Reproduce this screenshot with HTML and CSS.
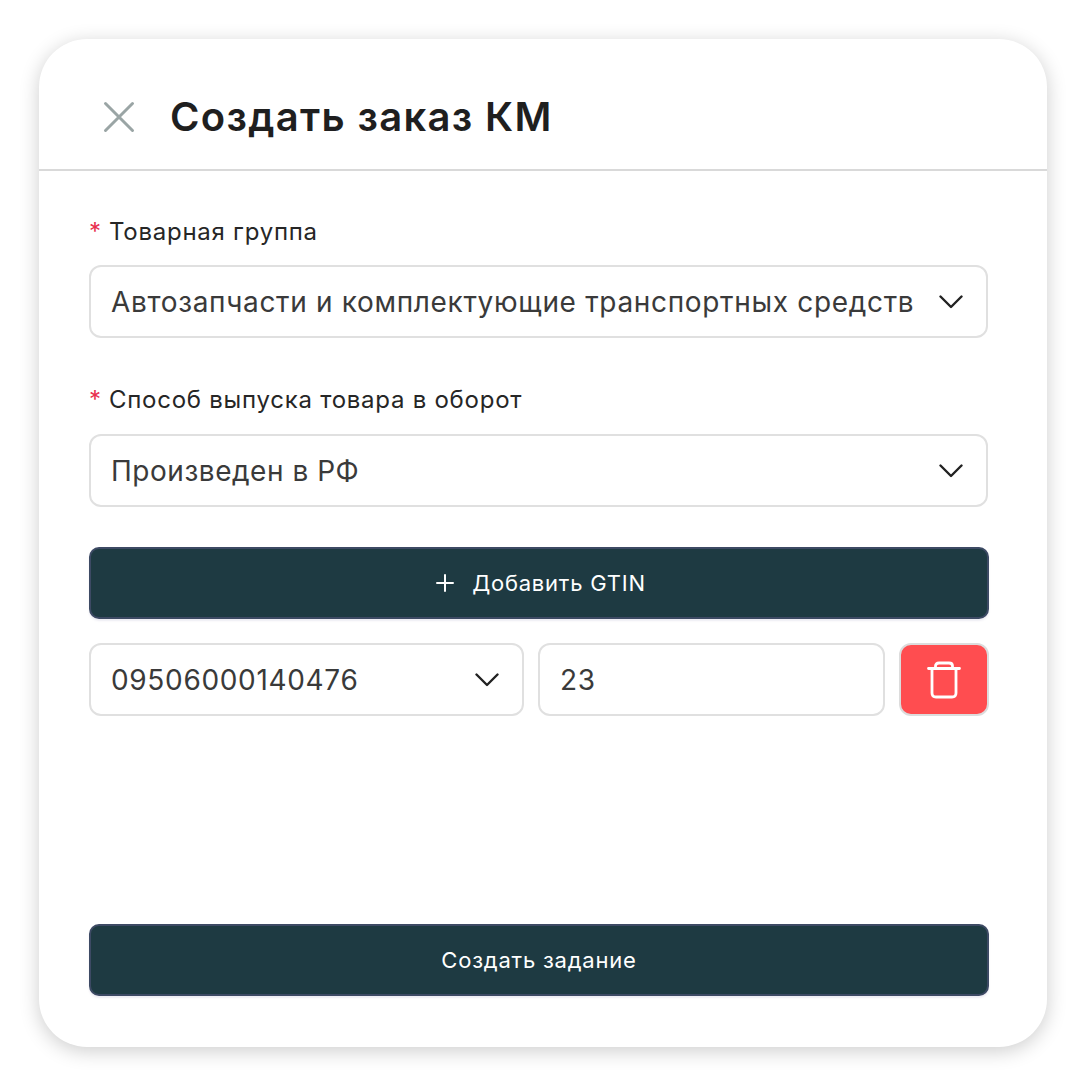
FILE: index.html
```html
<!DOCTYPE html>
<html lang="ru">
<head>
<meta charset="utf-8">
<title>Создать заказ КМ</title>
<link rel="stylesheet" href="styles.css">
</head>
<body>
<main class="card">
  <header class="head">
    <svg class="close" width="34" height="34" viewBox="0 0 34 34"><path d="M3.5 3.5 L30.5 30.5 M30.5 3.5 L3.5 30.5"/></svg>
    <h1 class="title">Создать заказ КМ</h1>
  </header>
  <div class="body">
    <div class="label label-first"><span class="req">*</span>Товарная группа</div>
    <div class="field field-full">
      <span class="value">Автозапчасти и комплектующие транспортных средств</span>
      <svg class="chev" width="24" height="14" viewBox="0 0 24 14"><path d="M1.5 1.5 L12 12 L22.5 1.5"/></svg>
    </div>
    <div class="label label-second"><span class="req">*</span>Способ выпуска товара в оборот</div>
    <div class="field field-full">
      <span class="value value-tight">Произведен в РФ</span>
      <svg class="chev" width="24" height="14" viewBox="0 0 24 14"><path d="M1.5 1.5 L12 12 L22.5 1.5"/></svg>
    </div>
    <button class="btn btn-add">
      <svg class="plus" width="18" height="18" viewBox="0 0 18 18"><path d="M9 1 V17 M1 9 H17"/></svg>
      Добавить GTIN
    </button>
    <div class="row">
      <div class="field field-gtin">
        <span class="value">09506000140476</span>
        <svg class="chev" width="24" height="14" viewBox="0 0 24 14"><path d="M1.5 1.5 L12 12 L22.5 1.5"/></svg>
      </div>
      <div class="field field-qty"><span class="value">23</span></div>
      <button class="del">
        <svg class="trash" width="34" height="38" viewBox="0 0 34 38"><path d="M1.5 7.5 H32.5 M5 7.5 V32 Q5 36 9 36 H25 Q29 36 29 32 V7.5 M8.5 7.5 V5 Q8.5 2 12 2 H22 Q25.5 2 25.5 5 V7.5"/></svg>
      </button>
    </div>
    <div class="spacer"></div>
    <button class="btn">Создать задание</button>
  </div>
</main>
</body>
</html>
```

FILE: styles.css
```css
* { box-sizing: border-box; }
html, body { margin: 0; padding: 0; background: #fff; }
body {
  width: 1085px;
  height: 1085px;
  padding: 39px 38px 38px 39px;
  font-family: Inter, "Liberation Sans", sans-serif;
  overflow: hidden;
}
.card {
  width: 1008px;
  height: 1008px;
  background: #fff;
  border-radius: 48px;
  box-shadow: 0 4px 20px rgba(0, 0, 0, 0.2);
  display: flex;
  flex-direction: column;
}
.head {
  height: 132px;
  border-bottom: 2px solid #d9d9d9;
  display: flex;
  align-items: center;
  padding: 26px 0 0 63px;
  flex: none;
}
.close { flex: none; margin-right: 34px; }
.close path { stroke: #9aa5a5; stroke-width: 3; fill: none; stroke-linecap: round; }
.title {
  margin: 0;
  font-size: 40px;
  line-height: 46px;
  font-weight: 600;
  letter-spacing: 1.32px;
  color: #1f1f1f;
}
.body {
  flex: 1;
  display: flex;
  flex-direction: column;
  padding: 0 58px 51px 50px;
}
.label {
  font-size: 24px;
  line-height: 32px;
  letter-spacing: 0.74px;
  color: #262626;
  display: flex;
  margin-bottom: 17px;
}
.label-first { margin-top: 45px; }
.label-second { margin-top: 46px; margin-bottom: 18px; }
.req { color: #e8304f; width: 20px; flex: none; }
.field {
  height: 73px;
  border: 2px solid #e0e0e0;
  border-radius: 12px;
  background: #fff;
  display: flex;
  align-items: center;
  justify-content: space-between;
  padding: 0 23px 0 20px;
}
.field-full { width: 899px; }
.value { font-size: 28px; line-height: 36px; letter-spacing: 0.67px; color: #3a3a3a; white-space: nowrap; }
.value-tight { letter-spacing: 0.53px; }
.chev { flex: none; }
.chev path { stroke: #222; stroke-width: 2.4; fill: none; stroke-linecap: round; stroke-linejoin: round; }
.btn {
  width: 900px;
  height: 72px;
  background: #1e3a42;
  border: 2px solid #3d4a64;
  border-radius: 10px;
  box-shadow: 0 2px 2px rgba(80, 70, 140, 0.1);
  color: #fff;
  font: 400 22px/32px Inter, "Liberation Sans", sans-serif;
  letter-spacing: 0.78px;
  display: flex;
  align-items: center;
  justify-content: center;
  padding: 0;
  flex: none;
}
.btn-add { margin-top: 40px; padding-left: 4px; }
.plus { margin-right: 18px; }
.plus path { stroke: #fff; stroke-width: 2; fill: none; stroke-linecap: round; }
.row { display: flex; gap: 14px; margin-top: 24px; }
.field-gtin { width: 435px; }
.field-qty { width: 347px; }
.del {
  width: 90px;
  height: 73px;
  background: #ff4d50;
  border: 2px solid #dcdcdc;
  border-radius: 12px;
  padding: 0;
  display: flex;
  align-items: center;
  justify-content: center;
}
.trash path { stroke: #fff; stroke-width: 2.8; fill: none; stroke-linecap: round; stroke-linejoin: round; }
.spacer { flex: 1; }
```
